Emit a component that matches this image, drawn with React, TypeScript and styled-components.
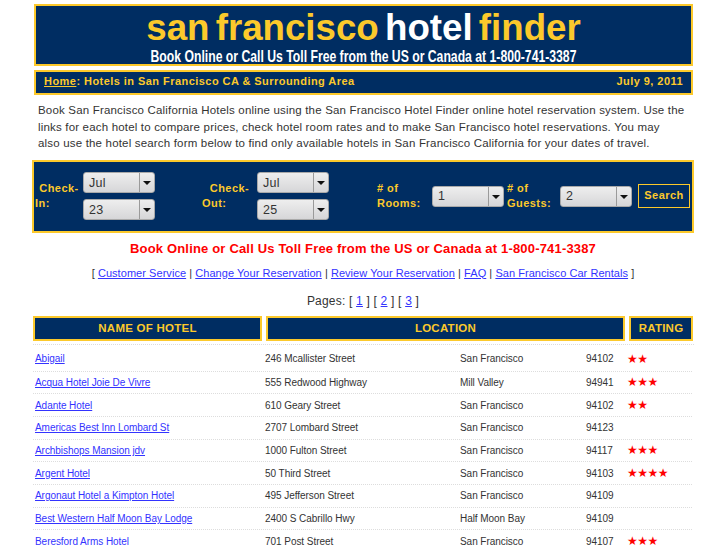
import styled, { createGlobalStyle } from "styled-components";

const navy = "#002d62";
const gold = "#fcc92b";
const link = "#3333ff";

const hotels = [
  { name: "Abigail", address: "246 Mcallister Street", city: "San Francisco", zip: "94102", stars: 2 },
  { name: "Acqua Hotel Joie De Vivre", address: "555 Redwood Highway", city: "Mill Valley", zip: "94941", stars: 3 },
  { name: "Adante Hotel", address: "610 Geary Street", city: "San Francisco", zip: "94102", stars: 2 },
  { name: "Americas Best Inn Lombard St", address: "2707 Lombard Street", city: "San Francisco", zip: "94123", stars: 0 },
  { name: "Archbishops Mansion jdv", address: "1000 Fulton Street", city: "San Francisco", zip: "94117", stars: 3 },
  { name: "Argent Hotel", address: "50 Third Street", city: "San Francisco", zip: "94103", stars: 4 },
  { name: "Argonaut Hotel a Kimpton Hotel", address: "495 Jefferson Street", city: "San Francisco", zip: "94109", stars: 0 },
  { name: "Best Western Half Moon Bay Lodge", address: "2400 S Cabrillo Hwy", city: "Half Moon Bay", zip: "94109", stars: 0 },
  { name: "Beresford Arms Hotel", address: "701 Post Street", city: "San Francisco", zip: "94107", stars: 3 },
];

function Picker({ value }: { value: string }) {
  return (
    <SelectBox>
      <SelectValue>{value}</SelectValue>
      <SelectArrow />
    </SelectBox>
  );
}

export default function App() {
  return (
    <>
      <GlobalStyle />
      <Page>
        <Banner>
          <BannerTitle>
            san francisco <White>hotel</White> finder
          </BannerTitle>
          <BannerSub>
            Book Online or Call Us Toll Free from the US or Canada at 1-800-741-3387
          </BannerSub>
        </Banner>
        <NavBar>
          <span>
            <HomeLink href="#">Home</HomeLink>: Hotels in San Francisco CA &amp; Surrounding Area
          </span>
          <span>July 9, 2011</span>
        </NavBar>
        <Intro>
          Book San Francisco California Hotels online using the San Francisco Hotel Finder online
          hotel reservation system. Use the
          <br />
          links for each hotel to compare prices, check hotel room rates and to make San Francisco
          hotel reservations. You may
          <br />
          also use the hotel search form below to find only available hotels in San Francisco
          California for your dates of travel.
        </Intro>
        <SearchForm>
          <FieldLabel $width={48}>
            <Centered>Check-</Centered>
            In:
          </FieldLabel>
          <PickerStack>
            <Picker value="Jul" />
            <Picker value="23" />
          </PickerStack>
          <FieldLabel $width={55} $left={47}>
            <Centered>Check-</Centered>
            Out:
          </FieldLabel>
          <PickerStack>
            <Picker value="Jul" />
            <Picker value="25" />
          </PickerStack>
          <FieldLabel $width={55} $left={48}>
            # of
            <br />
            Rooms:
          </FieldLabel>
          <Picker value="1" />
          <FieldLabel $width={53} $left={3}>
            # of
            <br />
            Guests:
          </FieldLabel>
          <Picker value="2" />
          <SearchButton>Search</SearchButton>
        </SearchForm>
        <CallLine>Book Online or Call Us Toll Free from the US or Canada at 1-800-741-3387</CallLine>
        <LinksLine>
          [ <a href="#">Customer Service</a> | <a href="#">Change Your Reservation</a> |{" "}
          <a href="#">Review Your Reservation</a> | <a href="#">FAQ</a> |{" "}
          <a href="#">San Francisco Car Rentals</a> ]
        </LinksLine>
        <PagesLine>
          Pages: [ <a href="#">1</a> ] [ <a href="#">2</a> ] [ <a href="#">3</a> ]
        </PagesLine>
        <TableHead>
          <HeadCell>NAME OF HOTEL</HeadCell>
          <HeadCell>LOCATION</HeadCell>
          <HeadCell>RATING</HeadCell>
        </TableHead>
        <Rows>
          {hotels.map((h) => (
            <Row key={h.name}>
              <a href="#">{h.name}</a>
              <span>{h.address}</span>
              <span>{h.city}</span>
              <span>{h.zip}</span>
              <Stars>{"★".repeat(h.stars)}</Stars>
            </Row>
          ))}
        </Rows>
      </Page>
    </>
  );
}

const GlobalStyle = createGlobalStyle`
  html, body {
    margin: 0;
    padding: 0;
    height: 545px;
    overflow: hidden;
    background: #fff;
  }
  body {
    font-family: "Liberation Sans", Arial, sans-serif;
    color: #333;
  }
  a {
    color: ${link};
  }
`;

const Page = styled.div`
  width: 662px;
  margin: 0 0 0 32px;
  padding-top: 4px;
`;

const Banner = styled.div`
  margin: 0 1px 0 2px;
  height: 62px;
  box-sizing: border-box;
  border: 2px solid ${gold};
  background: ${navy};
  text-align: center;
  overflow: hidden;
`;

const BannerTitle = styled.div`
  font-size: 36.7px;
  font-weight: bold;
  line-height: 38px;
  color: ${gold};
  margin-top: 3px;
  white-space: nowrap;
  word-spacing: -4px;
`;

const White = styled.span`
  color: #fff;
`;

const BannerSub = styled.div`
  font-size: 16.5px;
  font-weight: bold;
  line-height: 18px;
  color: #fff;
  white-space: nowrap;
  transform: scaleX(0.74);
`;

const NavBar = styled.div`
  display: flex;
  justify-content: space-between;
  box-sizing: border-box;
  height: 25px;
  margin: 4px 1px 0 2px;
  padding: 0 8px;
  border: 2px solid ${gold};
  background: ${navy};
  color: ${gold};
  font-size: 11px;
  font-weight: bold;
  line-height: 19px;
  letter-spacing: 0.45px;
`;

const HomeLink = styled.a`
  color: ${gold};
`;

const Intro = styled.p`
  margin: 7px 0 0 6px;
  width: 652px;
  font-size: 11.5px;
  line-height: 16.5px;
  letter-spacing: 0.18px;
  color: #333;
`;

const SearchForm = styled.div`
  display: flex;
  align-items: center;
  box-sizing: border-box;
  height: 73px;
  margin-top: 8px;
  padding: 0 2px 0 1px;
  border: 2px solid ${gold};
  background: ${navy};
`;

const FieldLabel = styled.div<{ $width: number; $left?: number }>`
  flex: none;
  width: ${(p) => p.$width}px;
  margin-left: ${(p) => p.$left ?? 0}px;
  color: ${gold};
  font-size: 11px;
  font-weight: bold;
  line-height: 15.5px;
  letter-spacing: 0.45px;
`;

const Centered = styled.div`
  text-align: center;
`;

const PickerStack = styled.div`
  display: flex;
  flex-direction: column;
  gap: 6px;
`;

const SelectBox = styled.div`
  flex: none;
  display: flex;
  align-items: center;
  box-sizing: border-box;
  width: 72px;
  height: 21px;
  border-radius: 3px;
  border: 1px solid #a9a9a9;
  background: linear-gradient(#eeeeee, #d6d6d8);
  color: #333;
  font-size: 12.5px;
`;

const SelectValue = styled.span`
  flex: 1;
  padding-left: 5px;
  letter-spacing: 0.3px;
`;

const SelectArrow = styled.span`
  flex: none;
  position: relative;
  width: 13px;
  height: 100%;
  border-left: 1px solid #9a9a9a;
  margin-right: 1px;
  &::after {
    content: "";
    position: absolute;
    left: 3px;
    top: 8px;
    border-left: 4px solid transparent;
    border-right: 4px solid transparent;
    border-top: 4px solid #111;
  }
`;

const SearchButton = styled.div`
  flex: none;
  box-sizing: border-box;
  width: 52px;
  height: 24px;
  margin-left: 6px;
  border: 1px solid ${gold};
  color: ${gold};
  font-size: 11px;
  font-weight: bold;
  line-height: 20px;
  letter-spacing: 0.45px;
  text-align: center;
`;

const CallLine = styled.div`
  margin-top: 8px;
  text-align: center;
  color: #ff0000;
  font-size: 13px;
  font-weight: bold;
  line-height: 16px;
  letter-spacing: 0.175px;
`;

const LinksLine = styled.div`
  margin-top: 9px;
  text-align: center;
  font-size: 11px;
  line-height: 14px;
  letter-spacing: 0.05px;
`;

const PagesLine = styled.div`
  margin-top: 14px;
  text-align: center;
  font-size: 12px;
  line-height: 14px;
  letter-spacing: 0.2px;
`;

const TableHead = styled.div`
  display: grid;
  grid-template-columns: 229px 359px 64px;
  gap: 4px;
  margin: 8px 0 0 1px;
  padding-bottom: 3px;
  border-bottom: 1px dotted #ddd;
`;

const HeadCell = styled.div`
  box-sizing: border-box;
  height: 25px;
  border: 2px solid ${gold};
  background: ${navy};
  color: ${gold};
  text-align: center;
  font-size: 11.5px;
  font-weight: bold;
  line-height: 20px;
  letter-spacing: 0.25px;
`;

const Rows = styled.div`
  margin-left: 1px;
  width: 659px;
`;

const Row = styled.div`
  display: grid;
  grid-template-columns: 230px 195px 126px 41px 1fr;
  align-items: center;
  box-sizing: border-box;
  height: 22.7px;
  padding-left: 2px;
  border-bottom: 1px dotted #ddd;
  font-size: 10px;
  letter-spacing: -0.05px;
  &:first-child {
    height: 27px;
    padding-top: 2px;
  }
`;

const Stars = styled.span`
  color: #ff0000;
  font-family: "DejaVu Sans", sans-serif;
  font-size: 12px;
  letter-spacing: -0.5px;
`;
